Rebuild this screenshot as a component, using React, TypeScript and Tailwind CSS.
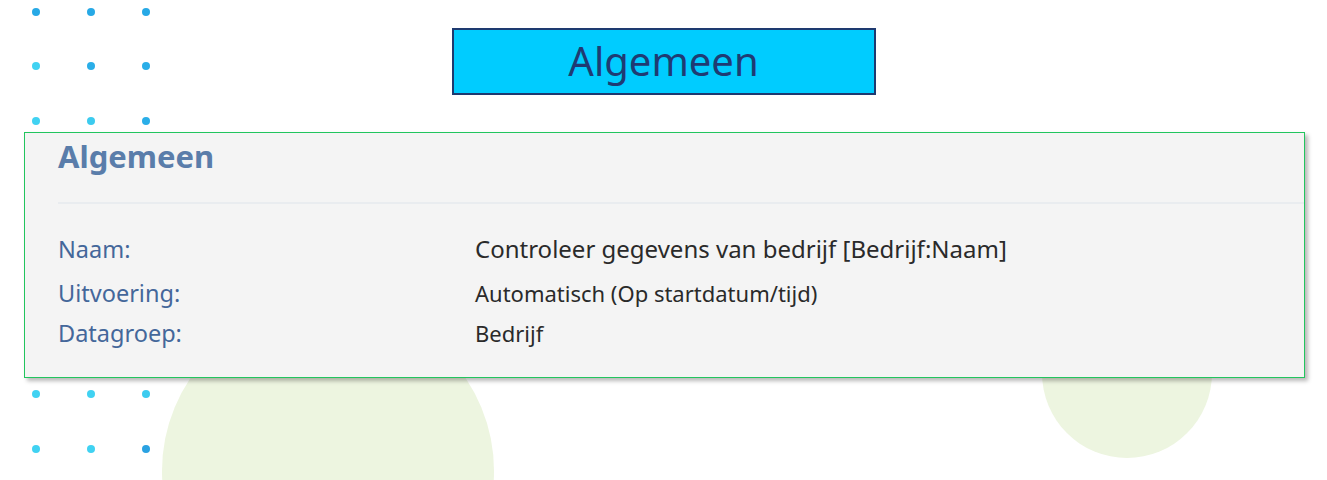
import React from "react";

const dotRows: { y: number; colors: string[] }[] = [
  { y: 12, colors: ["#27a9e6", "#27a9e6", "#27a9e6"] },
  { y: 66, colors: ["#40d2f2", "#2aaee8", "#2aaee8"] },
  { y: 121, colors: ["#40d2f2", "#3ccbef", "#2aaee8"] },
  { y: 176, colors: ["#40d2f2", "#3ccbef", "#2aaee8"] },
  { y: 231, colors: ["#40d2f2", "#3ccbef", "#2aaee8"] },
  { y: 285, colors: ["#40d2f2", "#3ccbef", "#2aaee8"] },
  { y: 340, colors: ["#40d2f2", "#3ccbef", "#2aaee8"] },
  { y: 394, colors: ["#40d2f2", "#40d2f2", "#3ccbef"] },
  { y: 449, colors: ["#40d2f2", "#40d2f2", "#2aa2e2"] },
];
const dotXs = [36, 91, 146];

function Decorations() {
  return (
    <div className="absolute inset-0 pointer-events-none">
      {dotRows.map((r, i) =>
        dotXs.map((x, j) => (
          <div
            key={`${i}-${j}`}
            className="absolute w-[8px] h-[8px] rounded-full"
            style={{ left: x - 4, top: r.y - 4, backgroundColor: r.colors[j] }}
          />
        ))
      )}
      <div className="absolute left-[162px] top-[305px] w-[332px] h-[332px] rounded-full bg-[#edf5e0]" />
      <div className="absolute left-[1042px] top-[288px] w-[170px] h-[170px] rounded-full bg-[#edf5e0]" />
    </div>
  );
}

export default function App() {
  const font = { fontFamily: '"Noto Sans", "Open Sans", sans-serif' };
  return (
    <div className="relative w-[1327px] h-[480px] overflow-hidden bg-white" style={font}>
      <Decorations />
      <div className="relative flex flex-col">
        <div className="flex justify-center pt-[28px]">
          <div className="w-[424px] h-[67px] bg-[#00ccff] border-2 border-[#1e3a70] flex items-center justify-center">
            <span className="text-[40px] leading-none text-[#1f3b73] pb-[2px]">Algemeen</span>
          </div>
        </div>
        <div className="mt-[37px] ml-[24px] w-[1281px] h-[246px] bg-[#f4f4f4] border border-[#22c55e] shadow-[3px_3px_4px_rgba(0,0,0,0.28)] flex flex-col">
          <div className="pl-[33px] pt-[5px] h-[69px]">
            <h2 className="text-[31px] font-bold leading-[36px] text-[#5a7daa]">Algemeen</h2>
          </div>
          <div className="ml-[33px] h-[2px] bg-[#e9ecef]" />
          <div className="pl-[33px] pt-[27px] flex flex-col">
            <div className="flex items-baseline h-[45px]">
              <div className="w-[417px] text-[23.5px] text-[#44679a]">Naam:</div>
              <div className="text-[24px] text-[#2a2a2a]">Controleer gegevens van bedrijf [Bedrijf:Naam]</div>
            </div>
            <div className="flex items-baseline h-[40px]">
              <div className="w-[417px] text-[23.5px] text-[#44679a]">Uitvoering:</div>
              <div className="text-[22px] text-[#2a2a2a]">Automatisch (Op startdatum/tijd)</div>
            </div>
            <div className="flex items-baseline h-[40px]">
              <div className="w-[417px] text-[23.5px] text-[#44679a]">Datagroep:</div>
              <div className="text-[22px] text-[#2a2a2a]">Bedrijf</div>
            </div>
          </div>
        </div>
      </div>
    </div>
  );
}
